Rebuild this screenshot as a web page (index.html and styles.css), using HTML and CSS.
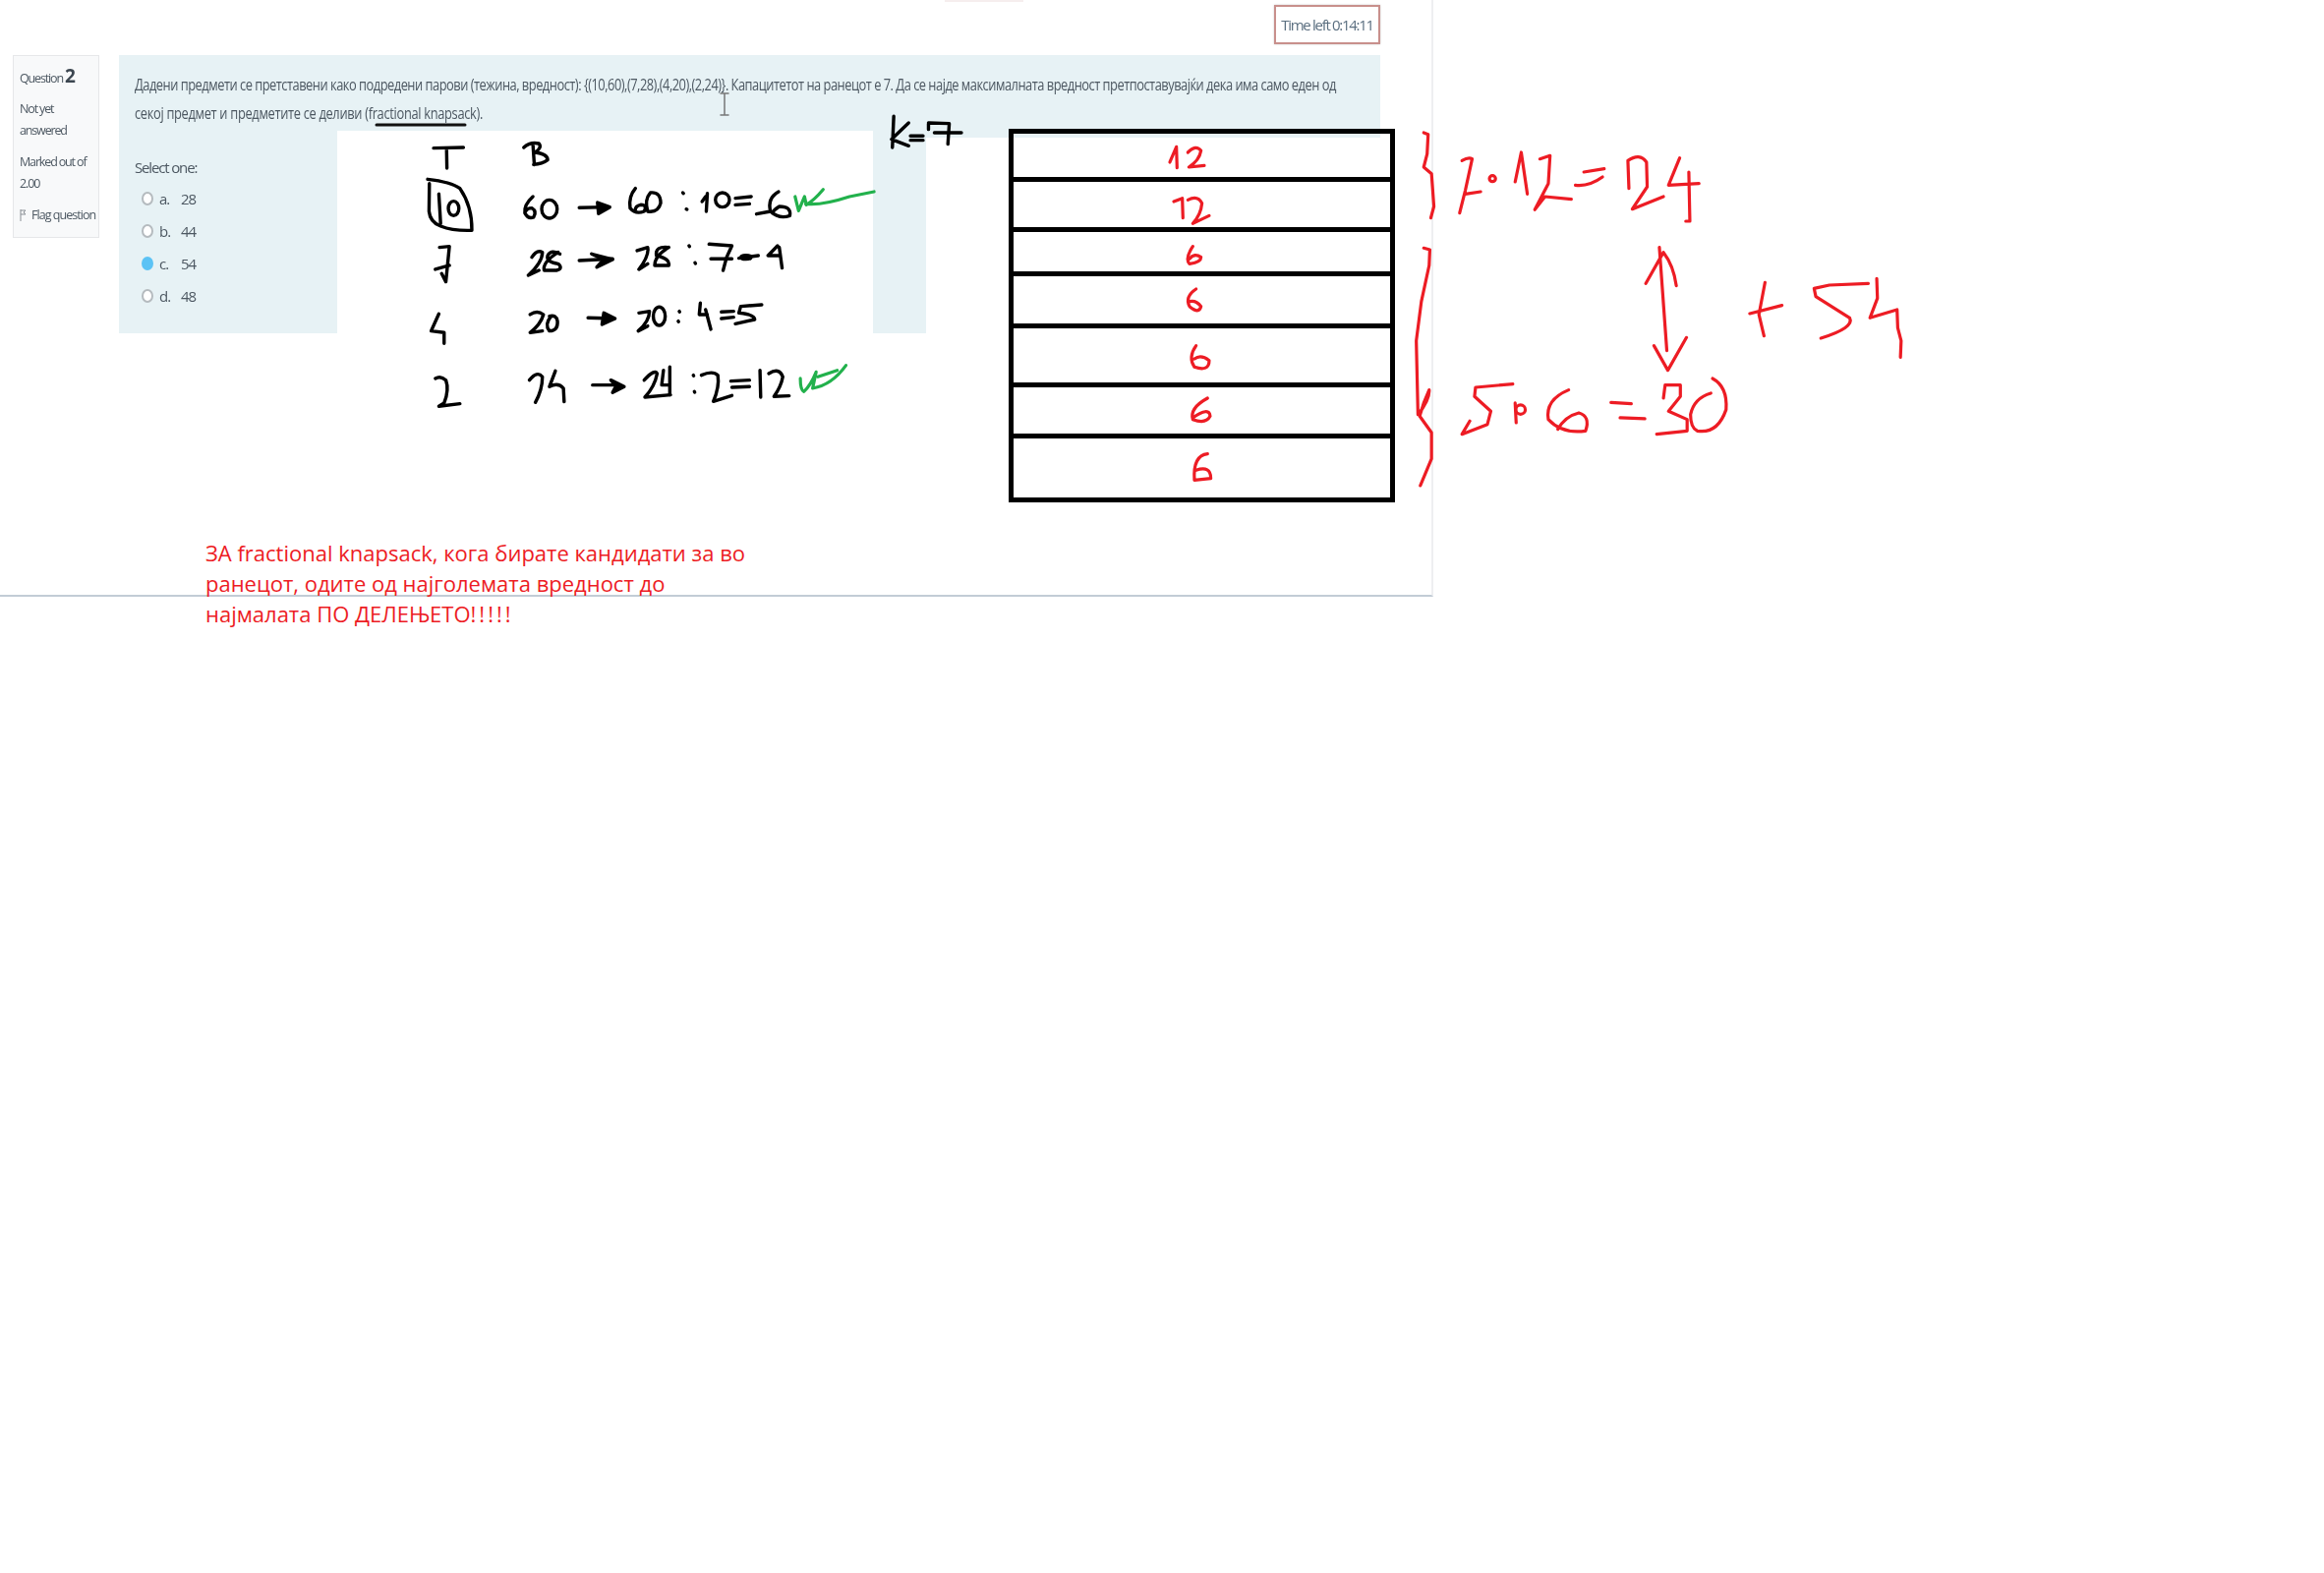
FILE: index.html
```html
<!DOCTYPE html>
<html lang="mk">
<head>
<meta charset="utf-8">
<title>Fractional knapsack</title>
<link rel="stylesheet" href="styles.css">
</head>
<body>
<div class="canvas">
  <div class="shot">
    <div class="topmark"></div>
    <div class="topbar"><div class="timer">Time left 0:14:11</div></div>
    <div class="main">
      <aside class="info">
        <p class="qno">Question <b>2</b></p>
        <p>Not yet<br>answered</p>
        <p>Marked out of<br>2.00</p>
        <p class="flag"><svg class="flagicon" viewBox="0 0 8 14"><path d="M1 1V13M1 2H6L4 4L6 6H1"/></svg>Flag question</p>
      </aside>
      <section class="panel">
        <p class="question"><span class="qline q1">Дадени предмети се претставени како подредени парови (тежина, вредност): {(10,60),(7,28),(4,20),(2,24)}. Капацитетот на ранецот е 7. Да се најде максималната вредност претпоставувајќи дека има само еден од</span><span class="qline q2">секој предмет и предметите се деливи (fractional knapsack).</span></p>
        <p class="select">Select one:</p>
        <div class="opt"><span class="radio"></span><span class="key">a.</span><span>28</span></div>
        <div class="opt"><span class="radio"></span><span class="key">b.</span><span>44</span></div>
        <div class="opt"><span class="radio on"></span><span class="key">c.</span><span>54</span></div>
        <div class="opt"><span class="radio"></span><span class="key">d.</span><span>48</span></div>
      </section>
    </div>
  </div>

  <div class="white white-a"></div>
  <div class="white white-b"></div>

  <svg class="ink" viewBox="0 0 2364 700" role="img" aria-label="T B; 10 60 → 60:10=6; 7 28 → 28:7=4; 4 20 → 20:4=5; 2 24 → 24:2=12; k=7; 2·12=24; 5·6=30; +54">
    <path class="uline" d="M383 127H473"/>
    <path class="cursor" d="M733 95H741M737 95V117M733 117H741"/>

    <g transform="translate(400 120) scale(.357 .3333)">
      <g class="bk">
        <path d="M115 92L200 90M152 95L153 153"/>
        <path d="M398 80L402 143M372 90Q390 72 415 78Q425 90 405 105Q440 110 440 128Q425 140 400 142"/>
        <path d="M98 187Q165 195 190 215Q225 270 224 343Q170 345 135 330Q105 318 102 285L103 200"/>
        <path d="M130 232L133 285L135 322"/><ellipse cx="172" cy="276" rx="15" ry="22"/>
        <path d="M398 240Q372 265 375 290Q385 310 400 303Q410 285 395 275Q382 275 377 285"/><ellipse cx="445" cy="278" rx="22" ry="28"/>
        <path d="M530 274L610 272"/><path class="fill" d="M582 258L617 272L585 292Z"/>
        <path d="M690 215Q670 240 675 275Q690 295 715 285Q725 265 705 265Q690 268 690 280"/><path d="M733 228Q715 250 725 285Q755 290 762 260Q762 225 733 228"/>
        <path d="M825 228L827 230M835 278L837 279"/>
        <path d="M895 230L892 285M880 255L890 240"/><ellipse cx="938" cy="250" rx="20" ry="22"/>
        <path d="M975 245L1020 240M975 265L1015 262"/>
        <path d="M1098 225Q1065 245 1075 285Q1100 310 1130 298Q1135 270 1100 270Q1085 280 1080 290M1035 293L1075 285"/>

        <path d="M132 395L160 392L150 500L138 475M120 462L160 450"/>
        <path d="M395 425Q410 400 425 410Q425 440 385 480L415 465"/><path d="M475 415Q450 400 440 420Q435 440 470 445Q485 460 465 465L430 465Q425 440 470 410"/>
        <path d="M530 435L625 430"/><path class="fill" d="M565 415L625 432L580 455L600 432Z"/>
        <path d="M695 405L725 395Q730 420 700 462L725 445"/><path d="M785 395Q745 390 750 420Q790 430 785 450L745 450Q745 420 785 395"/>
        <path d="M843 390L844 392M860 442L861 444"/>
        <path d="M900 385L965 390L950 425L940 465M905 430L965 430"/>
        <path d="M985 428L1040 420"/><ellipse class="fill" cx="1005" cy="425" rx="14" ry="6"/>
        <path d="M1095 390L1068 420L1100 420M1100 395L1108 458"/>

        <path d="M130 598L108 650L145 655L145 688"/>
        <path d="M390 600Q410 585 428 600Q420 630 390 655L425 650"/><path d="M450 605Q430 630 445 650Q470 650 468 620Q465 600 445 605"/>
        <path d="M555 610L630 612"/><path class="fill" d="M600 595L632 612L595 630Z"/>
        <path d="M700 595L730 590Q730 620 698 650L725 635"/><ellipse cx="758" cy="605" rx="17" ry="28"/>
        <path d="M815 590L816 592M812 620L813 622"/>
        <path d="M875 565L872 600L895 600M890 585L905 645"/>
        <path d="M935 592L970 590M935 612L970 608"/>
        <path d="M1050 570L990 575L985 595Q1030 600 1030 615L975 628"/>

        <path d="M120 795Q135 785 150 800Q160 830 145 870L130 880L190 872"/>
        <path d="M388 800Q410 770 425 790Q425 830 405 868"/><path d="M462 772L445 820Q470 805 485 825L487 866"/>
        <path d="M568 815L640 815"/><path class="fill" d="M620 800L658 820L625 838L635 818Z"/>
        <path d="M715 800Q745 765 752 780Q745 820 717 852L790 845"/><path d="M770 770L765 815L788 815M788 760L788 845"/>
        <path d="M855 785L856 787M858 835L859 837"/>
        <path d="M878 785Q910 770 925 785Q930 820 912 865L965 847"/>
        <path d="M962 803L1015 800M965 822L1015 820"/>
        <path d="M1045 770L1047 852"/>
        <path d="M1070 780Q1100 760 1110 790Q1105 820 1085 850L1128 848"/>
      </g>
      <g class="gr">
        <path d="M1145 240L1155 283L1172 240L1177 265Q1200 250 1225 218M1175 262Q1220 268 1300 240L1370 225"/>
        <path d="M1160 795Q1160 830 1170 835Q1190 815 1205 775L1195 825Q1250 815 1290 755M1210 790L1265 770"/>
      </g>
    </g>

    <g class="bk" transform="translate(737 0) scale(.459 .3333)">
      <path d="M375 355L372 450M408 375L370 425L408 445M412 415L440 415M412 428L440 428M452 375L498 377L495 440M452 378L452 395M465 405L525 405"/>
    </g>

    <g class="rd" transform="translate(1000 120) scale(.3333)">
      <path d="M570 135L590 88L592 152M625 105Q650 80 665 100Q660 130 628 150L675 145"/>
      <path d="M582 255L608 245L610 305M625 250Q655 235 668 260Q665 295 640 322L690 298"/>
      <path d="M640 392Q615 430 630 445Q665 440 665 425Q645 410 630 430"/>
      <path d="M650 522Q615 545 630 575Q660 600 665 575Q650 555 630 560"/>
      <path d="M650 695Q625 730 645 760Q690 775 690 740Q665 720 645 735"/>
      <path d="M685 855Q630 885 640 920Q680 935 693 910Q690 880 640 915"/>
      <path d="M685 1025Q640 1030 645 1105L695 1100Q695 1060 650 1075"/>
    </g>

    <g class="rd" transform="translate(1420 120) scale(.3444 .3333)">
      <path d="M82 45L95 50L92 110L82 150L105 170L112 270L103 305"/>
      <path d="M82 397L100 402L98 450L75 560L60 680L65 905Q100 860 98 830L82 870L70 910L105 960L105 1040L72 1122"/>
      <path d="M195 130Q215 118 225 125L205 220L188 290M205 232L250 225"/><circle cx="285" cy="185" r="9"/>
      <path d="M352 195L370 105L388 232"/><path d="M425 125L455 115L450 200L410 280L440 240L518 248"/>
      <path d="M555 165L615 155M530 205Q570 210 610 180"/>
      <path d="M688 215L685 130Q720 105 740 135L742 210L698 278L790 240"/>
      <path d="M838 122L805 205L895 200M865 165L868 315L856 315"/>
      <path d="M778 395L800 710M738 505L790 410Q820 450 828 512M762 695L803 770L858 670"/>
      <path d="M1090 502L1072 600L1087 665M1045 597L1140 572"/>
      <path d="M1395 505L1280 510L1235 520L1240 545L1340 610Q1355 640 1255 672"/>
      <path d="M1420 490L1422 550L1400 610L1480 585L1482 640L1492 680L1490 730"/>
      <path d="M345 812L235 822L232 850L280 895L270 935L195 965L218 925"/>
      <circle cx="368" cy="890" r="14"/><path d="M352 870L355 930"/>
      <path d="M510 830Q440 860 450 920Q490 965 560 955Q575 910 540 900Q500 910 478 950"/>
      <path d="M635 868L695 872M662 915L735 918"/>
      <path d="M790 855L795 815L840 815L840 850L805 895L860 920L860 955L770 965"/>
      <path d="M935 795Q980 820 975 890Q950 965 890 955Q870 945 870 905Q880 855 930 840"/>
    </g>
  </svg>

  <div class="tub">
    <div class="slot s1"></div>
    <div class="slot s2"></div>
    <div class="slot s3"></div>
    <div class="slot s4"></div>
    <div class="slot s5"></div>
    <div class="slot s6"></div>
    <div class="slot s7"></div>
  </div>

  <p class="note">ЗА fractional knapsack, кога бирате кандидати за во<br>ранецот, одите од најголемата вредност до<br>најмалата ПО ДЕЛЕЊЕТО<span class="bangs">!!!!!</span></p>
</div>
</body>
</html>
```

FILE: styles.css
```css
* { box-sizing: border-box; }
html, body { margin: 0; background: #fff; }
p { margin: 0; }

.canvas {
  position: relative;
  width: 2364px;
  height: 1600px;
  overflow: hidden;
  font-family: "Open Sans", "Noto Sans", sans-serif;
}

.shot {
  position: relative;
  width: 1458px;
  height: 607px;
  padding-top: 5px;
  border-right: 2px solid #eeeff1;
  border-bottom: 2px solid #c2ccd6;
  color: #4d5862;
}
.topmark {
  position: absolute;
  top: 0;
  left: 961px;
  width: 80px;
  height: 2px;
  background: #f6eeee;
}
.topbar { display: flex; justify-content: flex-end; padding-right: 52px; }
.timer {
  width: 108px;
  height: 40px;
  border: 2px solid #c8908c;
  box-shadow: 0 0 2px #ccc;
  display: flex;
  align-items: center;
  justify-content: center;
  font-size: 15px;
  letter-spacing: -1.3px;
  color: #5b6f80;
  filter: blur(.6px);
}

.main { display: flex; gap: 20px; padding: 11px 0 0 13px; }

.info {
  width: 88px;
  height: 186px;
  padding: 9px 6px;
  background: #f8f9fa;
  border: 1px solid #e6e7e9;
  font-size: 12.5px;
  line-height: 22px;
  letter-spacing: -1.15px;
  white-space: nowrap;
  filter: blur(.6px);
}
.info p { margin-bottom: 10px; }
.info .qno { margin-bottom: 9px; }
.qno b { font-size: 19px; color: #3c4650; }
.flag { display: flex; align-items: center; letter-spacing: -.95px; }
.flagicon { flex: none; width: 8px; height: 14px; margin-right: 4px; fill: none; stroke: #8a8f95; }

.panel {
  width: 1283px;
  height: 283px;
  padding: 16px 16px;
  background: #e7f2f5;
}
.question {
  font-size: 15.5px;
  line-height: 28.5px;
  white-space: nowrap;
  filter: blur(.6px);
}
.qline { display: block; transform: scaleX(.83); transform-origin: left center; }
.q1 { letter-spacing: -.6px; }
.q2 { letter-spacing: -.39px; }
.select {
  margin: 30px 0 4px;
  font-size: 15px;
  line-height: 22px;
  letter-spacing: -1.15px;
  filter: blur(.6px);
}
.opt {
  display: flex;
  align-items: center;
  height: 33px;
  padding-left: 7px;
  font-size: 15px;
  letter-spacing: -1px;
  filter: blur(.6px);
}
.radio {
  width: 12px;
  height: 14px;
  margin-right: 6px;
  border-radius: 50%;
  border: 2px solid #b5bbbf;
  background: #fff;
}
.radio.on { background: #5cc3f5; border-color: #5cc3f5; }
.key { width: 22px; }

.white { position: absolute; background: #fff; }
.white-a { left: 343px; top: 133px; width: 545px; height: 212px; }
.white-b { left: 942px; top: 140px; width: 466px; height: 205px; }

.ink {
  position: absolute;
  left: 0;
  top: 0;
  width: 2364px;
  height: 700px;
  fill: none;
  stroke-linecap: round;
  stroke-linejoin: round;
}
.ink path, .ink ellipse, .ink circle { vector-effect: non-scaling-stroke; }
.bk { stroke: #000; stroke-width: 3.4px; }
.gr { stroke: #22b14c; stroke-width: 3.2px; }
.rd { stroke: #ed1c24; stroke-width: 3.2px; }
.fill { fill: #000; }
.uline { stroke: #111; stroke-width: 3px; }
.cursor { stroke: #777; stroke-width: 1.5px; }

.tub {
  position: absolute;
  left: 1026px;
  top: 131px;
  width: 393px;
  height: 380px;
  display: flex;
  flex-direction: column;
  border: 5px solid #000;
}
.slot { border-bottom: 5px solid #000; margin-right: -4px; }
.s1 { height: 49px; }
.s2 { height: 51px; }
.s3 { height: 45px; }
.s4 { height: 53px; }
.s5 { height: 60px; }
.s6 { height: 52px; }
.s7 { flex: 1; border-bottom: 0; margin-right: 0; }

.note {
  position: absolute;
  left: 209px;
  top: 547px;
  font-size: 22px;
  line-height: 31px;
  color: #ed1c24;
  white-space: nowrap;
}
.bangs { letter-spacing: 3px; }
```
